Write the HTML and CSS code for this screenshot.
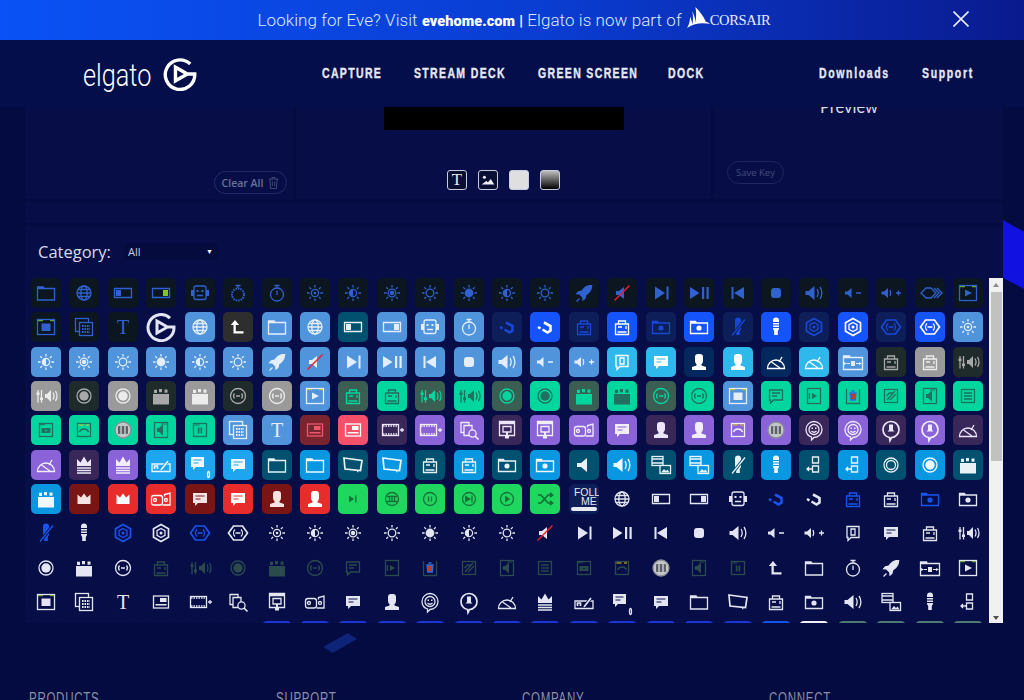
FILE: index.html
```html
<!DOCTYPE html>
<html lang="en">
<head>
<meta charset="utf-8">
<title>Elgato Stream Deck Key Creator</title>
<link rel="stylesheet" href="styles.css">
</head>
<body>
<svg class="sprite" xmlns="http://www.w3.org/2000/svg">
<defs><path id="rays" d="M15 7v2.6M15 20.4V23M7 15h2.6M20.4 15H23M9.3 9.3l1.8 1.8M18.9 18.9l1.8 1.8M9.3 20.7l1.8-1.8M18.9 11.1l1.8-1.8"/></defs>
<symbol id="folder" viewBox="0 0 30 30"><path d="M6.5 10.5h17v11.5h-17zM6.5 10.5V9h5.5l1.2 1.5"/></symbol>
<symbol id="globe" viewBox="0 0 30 30"><circle cx="15" cy="15" r="7"/><ellipse cx="15" cy="15" rx="3.2" ry="7"/><path d="M8 15h14M9 11.5h12M9 18.5h12"/></symbol>
<symbol id="swl" viewBox="0 0 30 30"><path d="M6.5 10.5h17v9h-17z"/><rect class="a" x="8" y="12" width="5" height="6"/></symbol>
<symbol id="swr" viewBox="0 0 30 30"><path d="M6.5 10.5h17v9h-17z"/><rect class="a" x="17" y="12" width="5" height="6"/></symbol>
<symbol id="robot" viewBox="0 0 30 30"><rect x="9" y="8" width="12" height="13.5" rx="2"/><path class="f" d="M6 12h3v6H6zM21 12h3v6h-3zM11.5 12h2v2h-2zM16.5 12h2v2h-2z"/><path d="M12 17.5h6"/></symbol>
<symbol id="timerd" viewBox="0 0 30 30"><circle class="dash" cx="15" cy="16.5" r="6"/><path d="M12.5 7.5h5M15 7.5v2.5"/></symbol>
<symbol id="timer" viewBox="0 0 30 30"><circle cx="15" cy="16.5" r="6.5"/><path d="M12.5 7.5h5M15 7.5v2.5M15 12.5v4.5"/></symbol>
<symbol id="suno" viewBox="0 0 30 30"><use href="#rays"/><circle cx="15" cy="15" r="3.6"/><circle class="f" cx="15" cy="15" r="1.3"/></symbol>
<symbol id="sunh" viewBox="0 0 30 30"><use href="#rays"/><circle cx="15" cy="15" r="3.6"/><path class="f" d="M15 11.4a3.6 3.6 0 0 0 0 7.2z"/></symbol>
<symbol id="sund" viewBox="0 0 30 30"><use href="#rays"/><circle cx="15" cy="15" r="3.8"/><circle class="f" cx="15" cy="15" r="2.2"/></symbol>
<symbol id="sunc" viewBox="0 0 30 30"><use href="#rays"/><circle cx="15" cy="15" r="3.8"/></symbol>
<symbol id="sunf" viewBox="0 0 30 30"><use href="#rays"/><circle class="f" cx="15" cy="15" r="4.4"/></symbol>
<symbol id="rocket" viewBox="0 0 30 30"><path class="f" d="M23.5 6.5c-5 0-8.500 2-11 6l-3.500.8-2.500 3 3.700.3 3 3 .3 3.700 3-2.500.8-3.500c4-2.500 6-5.800 6-10.800z"/><path d="M10.500 20.500l-3 3"/></symbol>
<symbol id="mute" viewBox="0 0 30 30"><path class="f" d="M9 13h3l5-4v12l-5-4H9z"/><path class="red" d="M7.500 22.500l15-15"/></symbol>
<symbol id="next" viewBox="0 0 30 30"><path class="f" d="M9 8.500l10 6.500-10 6.500zM20.500 8.500h2v13h-2z"/></symbol>
<symbol id="plps" viewBox="0 0 30 30"><path class="f" d="M6 9l9.500 6L6 21zM18 9h2.200v12H18zM22.500 9h2.200v12h-2.200z"/></symbol>
<symbol id="prev" viewBox="0 0 30 30"><path class="f" d="M21 9l-10 6 10 6zM8.500 9h2v12h-2z"/></symbol>
<symbol id="stop" viewBox="0 0 30 30"><rect class="f" x="10" y="10" width="10" height="10" rx="3"/></symbol>
<symbol id="vol" viewBox="0 0 30 30"><path class="f" d="M6.500 13h3l6-5v14l-6-5h-3z"/><path d="M18 11c1.500 2.500 1.500 5.500 0 8M21 9c2.500 3.500 2.500 8.500 0 12"/></symbol>
<symbol id="voll" viewBox="0 0 30 30"><path class="f" d="M8 13h4l6-5v14l-6-5H8z"/></symbol>
<symbol id="volm" viewBox="0 0 30 30"><path class="f" d="M7 13.500h2.500l4-3.500v10l-4-3.500H7zM18 14.300h5v1.400h-5z"/></symbol>
<symbol id="volp" viewBox="0 0 30 30"><path class="f" d="M5.500 13.500h2.500l4-3.500v10l-4-3.500H5.500z"/><path d="M14 12c1 2 1 4 0 6M20 15h5M22.500 12.500v5"/></symbol>
<symbol id="chev" viewBox="0 0 30 30"><path d="M11 10l-5 5 5 5h5l5-5-5-5zM19 10l5 5-5 5M22 10l5 5-5 5"/></symbol>
<symbol id="winplay" viewBox="0 0 30 30"><rect x="6.500" y="7.500" width="17" height="15"/><path class="s" d="M7 8.700h16"/><path class="f" d="M12 11.500l7 3.500-7 3.500z"/></symbol>
<symbol id="winsq" viewBox="0 0 30 30"><rect x="6.500" y="7.500" width="17" height="15"/><path class="s" d="M7 8.700h16"/><rect class="f" x="10.500" y="11.500" width="9" height="7.500"/></symbol>
<symbol id="multi" viewBox="0 0 30 30"><rect x="6.500" y="6.500" width="13" height="13"/><rect class="bgf" x="10.500" y="10.500" width="13" height="13"/><path class="dots" d="M13 14h8M13 17h8M13 20h8"/></symbol>
<symbol id="tee" viewBox="0 0 30 30"><text class="tt" x="15" y="22">T</text></symbol>
<symbol id="logo" viewBox="0 0 30 30"><path class="lg" d="M24 6.200A13 13 0 1 0 28 15H21.500L11 9v12l10.500-6"/></symbol>
<symbol id="up" viewBox="0 0 30 30"><path class="f" d="M12 8l-4.200 5h2.700v8.500h10v-2.200h-7.700V13h3.300z"/></symbol>
<symbol id="wave" viewBox="0 0 30 30"><path class="w" d="M14 10.500l6.500 3.500v4.500l-3 2-5-3M8 15l2.500 1.500"/></symbol>
<symbol id="cambox" viewBox="0 0 30 30"><path d="M8.500 12h13v10.500h-13zM11.500 12V9h7v3M10.500 20h9M11 15h4M19 14v3"/></symbol>
<symbol id="foldcam" viewBox="0 0 30 30"><path d="M6.500 11h17v10.500h-17zM6.500 11V9.500h5l1 1.500"/><circle class="f" cx="15" cy="16" r="2.600"/></symbol>
<symbol id="mic" viewBox="0 0 30 30"><path class="f" d="M12 8.500a3 3 0 0 1 6 0v8.500l-1.200 2v4h-3.600v-4L12 17z"/><path class="bgs" d="M12 10.500h6M12 13h6M12 15.500h6"/></symbol>
<symbol id="micx" viewBox="0 0 30 30"><path class="f" d="M12 8.500a3 3 0 0 1 6 0v8.500l-1.200 2v4h-3.600v-4L12 17z"/><path class="bgw" d="M9 23.500l13-16"/><path d="M9 23.500l13-16"/></symbol>
<symbol id="hex" viewBox="0 0 30 30"><path class="t" d="M15 6.500l7.500 4.200v8.600L15 23.500l-7.500-4.200v-8.600z"/><path d="M15 10.500l4 2.200v4.600l-4 2.200-4-2.200v-4.600z"/><circle class="f" cx="15" cy="15" r="1.500"/></symbol>
<symbol id="hex2" viewBox="0 0 30 30"><path class="t" d="M10.500 8h9l5 7-5 7h-9l-5-7z"/><path d="M12 11.500a5 5 0 0 0 0 7M18 11.500a5 5 0 0 1 0 7M12.500 15h5"/></symbol>
<symbol id="bdoc" viewBox="0 0 30 30"><path d="M9 8.500h12v11h-8l-3 3v-3H9z"/><path d="M13 11h4v6h-4z"/></symbol>
<symbol id="chat" viewBox="0 0 30 30"><path class="f" d="M8 9h14v10H13l-3 3v-3H8z"/><path class="bgs" d="M10.500 12h9M10.500 15h5"/></symbol>
<symbol id="chato" viewBox="0 0 30 30"><path d="M8.500 9h13v10h-9l-3 3v-3h-1z"/><path d="M11 12h8M11 15h5"/></symbol>
<symbol id="cclip" viewBox="0 0 30 30"><path class="f" d="M6 7h13v10h-8l-3 3v-3H6z"/><path class="bgs" d="M8.500 10h8M8.500 13h5"/><ellipse cx="23.500" cy="24.500" rx="1" ry="3"/></symbol>
<symbol id="person" viewBox="0 0 30 30"><path class="f" d="M11 10a3 3 0 0 1 3-3h2a3 3 0 0 1 3 3v4a4 4 0 0 1-1.500 3.200V18.500l4.500 1.500v3H8v-3l4.500-1.500v-1.300A4 4 0 0 1 11 14z"/></symbol>
<symbol id="gauge" viewBox="0 0 30 30"><path d="M6.500 21.500a8.500 8.500 0 0 1 17 0z"/><path d="M10.500 15l8.500 6M21 10l-3 5"/></symbol>
<symbol id="foldarr" viewBox="0 0 30 30"><path d="M5.500 10.500h19v12h-19zM5.500 10.500V9h6l1 1.500"/><path class="f" d="M13 14h4v5h-4zM6 15l3 1.500-3 1.500zM21 15l3 1.500-3 1.500zM9 16h3v1H9zM18 16h3v1h-3z"/></symbol>
<symbol id="mixer" viewBox="0 0 30 30"><path d="M7 9v12.500M10.500 9v12.500"/><path class="f" d="M5.500 11.500h3v2.500h-3zM9 16.500h3V19H9zM14 13h2l4-4v12l-4-4h-2z"/><path d="M22 11.500c1.200 2 1.200 5 0 7M24.500 10c1.800 3 1.800 7 0 10"/></symbol>
<symbol id="record" viewBox="0 0 30 30"><circle cx="15" cy="15" r="7"/><circle class="f" cx="15" cy="15" r="4.700"/></symbol>
<symbol id="rings" viewBox="0 0 30 30"><circle cx="15" cy="15" r="7"/><circle cx="15" cy="15" r="4.500"/></symbol>
<symbol id="clap" viewBox="0 0 30 30"><path class="f" d="M7 13h16v10.500H7zM8 8.700h3v3.300H8zM13 8h3v3.300h-3zM18.500 8.500h3v3.300h-3z"/></symbol>
<symbol id="cast" viewBox="0 0 30 30"><circle cx="15" cy="15" r="7.500"/><path d="M11.500 12.500a4 4 0 0 0 0 5M18.500 12.500a4 4 0 0 1 0 5M13 15h4"/></symbol>
<symbol id="wplay" viewBox="0 0 30 30"><rect x="8.500" y="7.500" width="13" height="15"/><path class="f" d="M13 12l5 3-5 3z"/><path d="M10.500 12v6"/></symbol>
<symbol id="wtrash" viewBox="0 0 30 30"><path d="M8.500 8v14.500h13V8"/><path class="tr" d="M12 12h6l-.7 7h-4.600zM13.500 10h3"/></symbol>
<symbol id="wslash" viewBox="0 0 30 30"><rect x="8.500" y="8.500" width="13" height="13"/><path d="M11 19l8-9M14 19l6-6M10.500 15l3-3h3"/></symbol>
<symbol id="wvol" viewBox="0 0 30 30"><rect x="8.500" y="7.500" width="13" height="15"/><path class="s" d="M15 9h5"/><path class="f" d="M11 13h2l4-3.500v11L13 17h-2z"/></symbol>
<symbol id="wlist" viewBox="0 0 30 30"><rect x="8.500" y="8.500" width="13" height="13"/><path d="M11 12h8M11 15h8M11 18h8"/></symbol>
<symbol id="wcam" viewBox="0 0 30 30"><rect x="8.500" y="8.500" width="13" height="13"/><path class="s" d="M9 9.700h12"/><path class="f" d="M10.500 13h9v5h-9z"/><circle class="bgf" cx="15" cy="15.500" r="1.500"/></symbol>
<symbol id="wcurve" viewBox="0 0 30 30"><rect x="8.500" y="8.500" width="13" height="13"/><path class="s" d="M9.500 10h5M17 10h3"/><path d="M10.500 17c1.500-4 7.500-4 9 0"/></symbol>
<symbol id="wpause" viewBox="0 0 30 30"><rect x="8.500" y="8.500" width="13" height="13"/><path class="s" d="M9.500 10h11"/><path class="f" d="M12.800 12.500h1.700v6h-1.700zM15.500 12.500h1.700v6h-1.700z"/></symbol>
<symbol id="round" viewBox="0 0 30 30"><circle class="rg" cx="15" cy="15" r="8"/><rect class="rk" x="10" y="11" width="10" height="8" rx="1"/><path class="rline" d="M13 11v8M17 11v8"/></symbol>
<symbol id="card" viewBox="0 0 30 30"><rect x="7.500" y="9" width="15" height="12"/><path class="f" d="M14 11h6.500v4H14zM9.500 17h11v1.500h-11z"/></symbol>
<symbol id="filmp" viewBox="0 0 30 30"><rect x="5.500" y="9.500" width="16" height="11"/><path class="dsh" d="M6 11h15M6 19h15"/><path d="M23 15h4M25 13v4"/></symbol>
<symbol id="copys" viewBox="0 0 30 30"><path d="M7 7.500h8v10H7z"/><path class="bgf" d="M10 10.500h8v10h-8z"/><circle class="bgf" cx="18.500" cy="18.500" r="3.600"/><path class="t" d="M21 21l3.500 3.500"/></symbol>
<symbol id="pres" viewBox="0 0 30 30"><path d="M7.500 6.500h15v14h-15z"/><path class="f" d="M7 6h16v3.200H7zM14 17h2v3.500h-2zM13 21h4v2.500h-4z"/><path d="M11 11.500h8v5.500h-8z"/></symbol>
<symbol id="cass" viewBox="0 0 30 30"><rect x="5.500" y="11.500" width="11" height="9.500" rx="2.500"/><path d="M16.500 21h7.500V9l-5.500 1.500v2"/><circle cx="9" cy="16" r="1.500"/><circle cx="20" cy="16" r="1.500"/></symbol>
<symbol id="smile" viewBox="0 0 30 30"><path d="M7 14.500a8 8 0 1 1 8 8l-2.500 2.500v-3A8 8 0 0 1 7 14.500z"/><circle cx="15" cy="14.500" r="5"/><path class="f" d="M12.500 12.500h1.500v1.500h-1.500zM16 12.500h1.500v1.500H16z"/><path d="M12.500 16c1.500 1.500 3.500 1.500 5 0"/></symbol>
<symbol id="head" viewBox="0 0 30 30"><path class="t" d="M7 14.500a8 8 0 1 1 8.500 8L14 25.500l-.5-3a8 8 0 0 1-6.500-8z"/><path class="f" d="M13 9.500h4v5.500l1.500 1.500h-7L13 15z"/></symbol>
<symbol id="crown" viewBox="0 0 30 30"><path class="f" d="M8 9l3.500 3.500L15 6.500l3.500 6L22 9v7H8z"/><path d="M8 18h14M8 20.500h14M8 23h14"/></symbol>
<symbol id="crown2" viewBox="0 0 30 30"><path class="f" d="M8.500 10.500l3.500 3L15 9.500l3 4 3.500-3V20h-13z"/></symbol>
<symbol id="sign" viewBox="0 0 30 30"><path d="M6 14h18v7.500H6z"/><path class="bgw" d="M15 20l7-9"/><path class="t" d="M15 20l7-9M8.500 19v-3h3v3"/></symbol>
<symbol id="tilt" viewBox="0 0 30 30"><path class="t" d="M6 8l18 2.500-1.500 10-15.500-1.500z"/><path class="f" d="M18 20l2 2.700.6-2.500z"/></symbol>
<symbol id="fimg" viewBox="0 0 30 30"><rect x="6" y="6.500" width="11" height="9"/><path d="M6 9h11M6 13h11"/><rect class="bgf" x="14" y="15.500" width="10.500" height="8"/><path class="f" d="M15 22.500l3-3.500 2 2 1.500-1.500 2 3z"/></symbol>
<symbol id="usb" viewBox="0 0 30 30"><path d="M13.500 7h6v6h-6zM13.500 16h6v6h-6zM8 19h5M10 17l-2 2 2 2"/></symbol>
<symbol id="cnext" viewBox="0 0 30 30"><path class="f" d="M11 11.500l5 3.500-5 3.500zM17 11.500h1.500v7H17z"/></symbol>
<symbol id="cfilm" viewBox="0 0 30 30"><circle cx="15" cy="15" r="6.500"/><path d="M10 12.500h10M10 17.500h10M12.500 12v6M15 12v6M17.500 12v6"/></symbol>
<symbol id="cpause" viewBox="0 0 30 30"><circle cx="15" cy="15" r="6.500"/><path d="M13.500 12.500v5M16.500 12.500v5"/></symbol>
<symbol id="cskip" viewBox="0 0 30 30"><circle cx="15" cy="15" r="6.500"/><path class="f" d="M11 11.500l6 3.500-6 3.500z"/><path d="M18 11.500v7"/></symbol>
<symbol id="cplay" viewBox="0 0 30 30"><circle cx="15" cy="15" r="6.500"/><path class="f" d="M13 11.500l5 3.500-5 3.500z"/></symbol>
<symbol id="shuf" viewBox="0 0 30 30"><path class="t" d="M8 11h3l7 8h3.500M8 19h3l7-8h3.500M20 9l2.500 2-2.500 2M20 17l2.500 2-2.500 2"/></symbol>
</svg>

<div class="promo">
  <p class="promo-text">Looking for Eve? Visit <strong>evehome.com</strong> <strong>|</strong> Elgato is now part of</p>
  <span class="corsair">
    <svg class="sails" viewBox="0 0 22 20"><path d="M0 20c2-3 3-7 3-11 1 3 2 5 2 8 1-4 1-9 0-13 2 4 3 7 3 11 1-5 1-11 0-15 4 4 8 9 10 14 1 0 3 1 4 2-7-1-15-1-22 4z"/></svg>
    <span class="corsair-name">CORSAIR</span>
  </span>
  <svg class="close" viewBox="0 0 16 16"><path d="M.5.5l15 15M15.500.5l-15 15"/></svg>
</div>

<header class="nav">
  <a class="brand"><span class="brand-name">elgato</span><svg class="brand-mark"><use href="#logo"/></svg></a>
  <nav class="links main-links">
    <a>CAPTURE</a><a>STREAM DECK</a><a>GREEN SCREEN</a><a>DOCK</a>
  </nav>
  <nav class="links aux">
    <a>Downloads</a><a>Support</a>
  </nav>
</header>

<main class="page">
  <section class="editor">
    <div class="pane pane-left">
      <button class="pill clear">Clear All
        <svg class="trash" viewBox="0 0 14 16"><path d="M1 3h12M5 3V1h4v2M2.500 3l.7 12h7.600l.7-12M5.500 6v6M8.500 6v6"/></svg>
      </button>
    </div>
    <div class="pane pane-mid">
      <div class="lcd"></div>
      <div class="tools">
        <span class="tool"><svg viewBox="0 0 30 30"><text class="tt big" x="15" y="24">T</text></svg></span>
        <span class="tool"><svg viewBox="0 0 20 20"><circle class="tw" cx="6" cy="7" r="1.700"/><path class="tw" d="M3 15l5-4 2 1.500 3-3.500 4 6z"/></svg></span>
        <span class="tool solid"></span>
        <span class="tool grad"></span>
      </div>
    </div>
    <div class="pane pane-right">
      <h3 class="preview">Preview</h3>
      <button class="pill save">Save Key</button>
    </div>
  </section>
  <div class="band"></div>
  <section class="library">
    <div class="cat-row">
      <label class="cat-label">Category:</label>
      <div class="select">All<span class="caret">▼</span></div>
    </div>
    <div class="lib-body">
      <div class="grid">
<span class="k d"><svg><use href="#folder"/></svg></span><span class="k d"><svg><use href="#globe"/></svg></span><span class="k d"><svg><use href="#swl"/></svg></span><span class="k d ag"><svg><use href="#swr"/></svg></span><span class="k d"><svg><use href="#robot"/></svg></span><span class="k d"><svg><use href="#timerd"/></svg></span><span class="k d"><svg><use href="#timer"/></svg></span><span class="k d"><svg><use href="#suno"/></svg></span><span class="k d"><svg><use href="#sunh"/></svg></span><span class="k d"><svg><use href="#sund"/></svg></span><span class="k d"><svg><use href="#sunc"/></svg></span><span class="k d"><svg><use href="#sunf"/></svg></span><span class="k d"><svg><use href="#sunh"/></svg></span><span class="k d"><svg><use href="#sunc"/></svg></span><span class="k d"><svg><use href="#rocket"/></svg></span><span class="k d"><svg><use href="#mute"/></svg></span><span class="k d"><svg><use href="#next"/></svg></span><span class="k d"><svg><use href="#plps"/></svg></span><span class="k d"><svg><use href="#prev"/></svg></span><span class="k d"><svg><use href="#stop"/></svg></span><span class="k d"><svg><use href="#vol"/></svg></span><span class="k d"><svg><use href="#volm"/></svg></span><span class="k d"><svg><use href="#volp"/></svg></span><span class="k d"><svg><use href="#chev"/></svg></span><span class="k d ag"><svg><use href="#winplay"/></svg></span>
<span class="k d ag"><svg><use href="#winsq"/></svg></span><span class="k d"><svg><use href="#multi"/></svg></span><span class="k d"><svg><use href="#tee"/></svg></span><span class="k n"><svg><use href="#logo"/></svg></span><span class="k b"><svg><use href="#globe"/></svg></span><span class="k gy"><svg><use href="#up"/></svg></span><span class="k b"><svg><use href="#folder"/></svg></span><span class="k b"><svg><use href="#globe"/></svg></span><span class="k st"><svg><use href="#swl"/></svg></span><span class="k b"><svg><use href="#swr"/></svg></span><span class="k b"><svg><use href="#robot"/></svg></span><span class="k b"><svg><use href="#timer"/></svg></span><span class="k nv"><svg><use href="#wave"/></svg></span><span class="k bb"><svg><use href="#wave"/></svg></span><span class="k nv"><svg><use href="#cambox"/></svg></span><span class="k bb"><svg><use href="#cambox"/></svg></span><span class="k nv"><svg><use href="#foldcam"/></svg></span><span class="k bb"><svg><use href="#foldcam"/></svg></span><span class="k nv"><svg><use href="#micx"/></svg></span><span class="k bb"><svg><use href="#mic"/></svg></span><span class="k nv"><svg><use href="#hex"/></svg></span><span class="k bb"><svg><use href="#hex"/></svg></span><span class="k nv"><svg><use href="#hex2"/></svg></span><span class="k bb"><svg><use href="#hex2"/></svg></span><span class="k b"><svg><use href="#suno"/></svg></span>
<span class="k b"><svg><use href="#sunh"/></svg></span><span class="k b"><svg><use href="#sund"/></svg></span><span class="k b"><svg><use href="#sunc"/></svg></span><span class="k b"><svg><use href="#sunf"/></svg></span><span class="k b"><svg><use href="#sunh"/></svg></span><span class="k b"><svg><use href="#sunc"/></svg></span><span class="k b"><svg><use href="#rocket"/></svg></span><span class="k b"><svg><use href="#mute"/></svg></span><span class="k b"><svg><use href="#next"/></svg></span><span class="k b"><svg><use href="#plps"/></svg></span><span class="k b"><svg><use href="#prev"/></svg></span><span class="k b"><svg><use href="#stop"/></svg></span><span class="k b"><svg><use href="#vol"/></svg></span><span class="k b"><svg><use href="#volm"/></svg></span><span class="k b"><svg><use href="#volp"/></svg></span><span class="k cy"><svg><use href="#bdoc"/></svg></span><span class="k cy"><svg><use href="#chat"/></svg></span><span class="k cn"><svg><use href="#person"/></svg></span><span class="k cy"><svg><use href="#person"/></svg></span><span class="k cn"><svg><use href="#gauge"/></svg></span><span class="k cy"><svg><use href="#gauge"/></svg></span><span class="k b"><svg><use href="#foldarr"/></svg></span><span class="k gd"><svg><use href="#cambox"/></svg></span><span class="k gl"><svg><use href="#cambox"/></svg></span><span class="k gd"><svg><use href="#mixer"/></svg></span>
<span class="k gl"><svg><use href="#mixer"/></svg></span><span class="k gd"><svg><use href="#record"/></svg></span><span class="k gl"><svg><use href="#record"/></svg></span><span class="k gd"><svg><use href="#clap"/></svg></span><span class="k gl"><svg><use href="#clap"/></svg></span><span class="k gd"><svg><use href="#cast"/></svg></span><span class="k gl"><svg><use href="#cast"/></svg></span><span class="k b ac"><svg><use href="#winplay"/></svg></span><span class="k td"><svg><use href="#cambox"/></svg></span><span class="k tl"><svg><use href="#cambox"/></svg></span><span class="k td"><svg><use href="#mixer"/></svg></span><span class="k tl"><svg><use href="#mixer"/></svg></span><span class="k td"><svg><use href="#record"/></svg></span><span class="k tl"><svg><use href="#record"/></svg></span><span class="k td"><svg><use href="#clap"/></svg></span><span class="k tl"><svg><use href="#clap"/></svg></span><span class="k td"><svg><use href="#cast"/></svg></span><span class="k tl"><svg><use href="#cast"/></svg></span><span class="k b ac"><svg><use href="#winsq"/></svg></span><span class="k tl"><svg><use href="#chato"/></svg></span><span class="k tl"><svg><use href="#wplay"/></svg></span><span class="k tl"><svg><use href="#wtrash"/></svg></span><span class="k tl"><svg><use href="#wslash"/></svg></span><span class="k tl"><svg><use href="#wvol"/></svg></span><span class="k tl"><svg><use href="#wlist"/></svg></span>
<span class="k tl"><svg><use href="#wcam"/></svg></span><span class="k tl ac"><svg><use href="#wcurve"/></svg></span><span class="k tl"><svg><use href="#round"/></svg></span><span class="k tl"><svg><use href="#wvol"/></svg></span><span class="k tl"><svg><use href="#wpause"/></svg></span><span class="k b"><svg><use href="#multi"/></svg></span><span class="k b"><svg><use href="#tee"/></svg></span><span class="k rd"><svg><use href="#card"/></svg></span><span class="k rs"><svg><use href="#card"/></svg></span><span class="k pd"><svg><use href="#filmp"/></svg></span><span class="k pl"><svg><use href="#filmp"/></svg></span><span class="k pl"><svg><use href="#copys"/></svg></span><span class="k pd"><svg><use href="#pres"/></svg></span><span class="k pl"><svg><use href="#pres"/></svg></span><span class="k pl"><svg><use href="#cass"/></svg></span><span class="k pl"><svg><use href="#chat"/></svg></span><span class="k pd"><svg><use href="#person"/></svg></span><span class="k pl"><svg><use href="#person"/></svg></span><span class="k pl ac"><svg><use href="#wcurve"/></svg></span><span class="k pl"><svg><use href="#round"/></svg></span><span class="k pd"><svg><use href="#smile"/></svg></span><span class="k pl"><svg><use href="#smile"/></svg></span><span class="k pd"><svg><use href="#head"/></svg></span><span class="k pl"><svg><use href="#head"/></svg></span><span class="k pd"><svg><use href="#gauge"/></svg></span>
<span class="k pl"><svg><use href="#gauge"/></svg></span><span class="k pd"><svg><use href="#crown"/></svg></span><span class="k pl"><svg><use href="#crown"/></svg></span><span class="k sk"><svg><use href="#sign"/></svg></span><span class="k sk"><svg><use href="#cclip"/></svg></span><span class="k sk"><svg><use href="#chat"/></svg></span><span class="k st"><svg><use href="#folder"/></svg></span><span class="k sb"><svg><use href="#folder"/></svg></span><span class="k st"><svg><use href="#tilt"/></svg></span><span class="k sb"><svg><use href="#tilt"/></svg></span><span class="k st"><svg><use href="#cambox"/></svg></span><span class="k sb"><svg><use href="#cambox"/></svg></span><span class="k st"><svg><use href="#foldcam"/></svg></span><span class="k sb"><svg><use href="#foldcam"/></svg></span><span class="k st"><svg><use href="#voll"/></svg></span><span class="k sb"><svg><use href="#vol"/></svg></span><span class="k st"><svg><use href="#fimg"/></svg></span><span class="k sb"><svg><use href="#fimg"/></svg></span><span class="k st"><svg><use href="#micx"/></svg></span><span class="k sb"><svg><use href="#mic"/></svg></span><span class="k st"><svg><use href="#usb"/></svg></span><span class="k sb"><svg><use href="#usb"/></svg></span><span class="k st"><svg><use href="#rings"/></svg></span><span class="k sb"><svg><use href="#record"/></svg></span><span class="k st"><svg><use href="#clap"/></svg></span>
<span class="k sb"><svg><use href="#clap"/></svg></span><span class="k dr"><svg><use href="#crown2"/></svg></span><span class="k r"><svg><use href="#crown2"/></svg></span><span class="k r"><svg><use href="#cass"/></svg></span><span class="k dr"><svg><use href="#chat"/></svg></span><span class="k r"><svg><use href="#chat"/></svg></span><span class="k dr"><svg><use href="#person"/></svg></span><span class="k r"><svg><use href="#person"/></svg></span><span class="k g"><svg><use href="#cnext"/></svg></span><span class="k g"><svg><use href="#cfilm"/></svg></span><span class="k g"><svg><use href="#cpause"/></svg></span><span class="k g"><svg><use href="#cskip"/></svg></span><span class="k g"><svg><use href="#cplay"/></svg></span><span class="k g"><svg><use href="#shuf"/></svg></span><span class="k fm"><span class="fm-text">FOLLOW<br><span class="fm-me">ME</span></span><span class="fm-bar"></span></span><span class="k n"><svg><use href="#globe"/></svg></span><span class="k n"><svg><use href="#swl"/></svg></span><span class="k n"><svg><use href="#swr"/></svg></span><span class="k n"><svg><use href="#robot"/></svg></span><span class="k nb"><svg><use href="#wave"/></svg></span><span class="k n"><svg><use href="#wave"/></svg></span><span class="k nb"><svg><use href="#cambox"/></svg></span><span class="k n"><svg><use href="#cambox"/></svg></span><span class="k nb"><svg><use href="#foldcam"/></svg></span><span class="k n"><svg><use href="#foldcam"/></svg></span>
<span class="k nb"><svg><use href="#micx"/></svg></span><span class="k n"><svg><use href="#mic"/></svg></span><span class="k nb"><svg><use href="#hex"/></svg></span><span class="k n"><svg><use href="#hex"/></svg></span><span class="k nb"><svg><use href="#hex2"/></svg></span><span class="k n"><svg><use href="#hex2"/></svg></span><span class="k n"><svg><use href="#suno"/></svg></span><span class="k n"><svg><use href="#sunh"/></svg></span><span class="k n"><svg><use href="#sund"/></svg></span><span class="k n"><svg><use href="#sunc"/></svg></span><span class="k n"><svg><use href="#sunf"/></svg></span><span class="k n"><svg><use href="#sunh"/></svg></span><span class="k n"><svg><use href="#sunc"/></svg></span><span class="k n"><svg><use href="#mute"/></svg></span><span class="k n"><svg><use href="#next"/></svg></span><span class="k n"><svg><use href="#plps"/></svg></span><span class="k n"><svg><use href="#prev"/></svg></span><span class="k n"><svg><use href="#stop"/></svg></span><span class="k n"><svg><use href="#vol"/></svg></span><span class="k n"><svg><use href="#volm"/></svg></span><span class="k n"><svg><use href="#volp"/></svg></span><span class="k n"><svg><use href="#bdoc"/></svg></span><span class="k n"><svg><use href="#chat"/></svg></span><span class="k n"><svg><use href="#cambox"/></svg></span><span class="k n"><svg><use href="#mixer"/></svg></span>
<span class="k n"><svg><use href="#record"/></svg></span><span class="k n"><svg><use href="#clap"/></svg></span><span class="k n"><svg><use href="#cast"/></svg></span><span class="k dm"><svg><use href="#cambox"/></svg></span><span class="k dm"><svg><use href="#mixer"/></svg></span><span class="k dm"><svg><use href="#record"/></svg></span><span class="k dm"><svg><use href="#clap"/></svg></span><span class="k dm"><svg><use href="#cast"/></svg></span><span class="k dm"><svg><use href="#chato"/></svg></span><span class="k dm"><svg><use href="#wplay"/></svg></span><span class="k dm"><svg><use href="#wtrash"/></svg></span><span class="k dm"><svg><use href="#wslash"/></svg></span><span class="k dm"><svg><use href="#wvol"/></svg></span><span class="k dm"><svg><use href="#wlist"/></svg></span><span class="k dm"><svg><use href="#wcam"/></svg></span><span class="k dm ac"><svg><use href="#wcurve"/></svg></span><span class="k n"><svg><use href="#round"/></svg></span><span class="k dm"><svg><use href="#wvol"/></svg></span><span class="k dm"><svg><use href="#wpause"/></svg></span><span class="k n"><svg><use href="#up"/></svg></span><span class="k n"><svg><use href="#folder"/></svg></span><span class="k n"><svg><use href="#timer"/></svg></span><span class="k n"><svg><use href="#rocket"/></svg></span><span class="k n"><svg><use href="#foldarr"/></svg></span><span class="k n ag"><svg><use href="#winplay"/></svg></span>
<span class="k n ag"><svg><use href="#winsq"/></svg></span><span class="k n"><svg><use href="#multi"/></svg></span><span class="k n"><svg><use href="#tee"/></svg></span><span class="k n"><svg><use href="#card"/></svg></span><span class="k n"><svg><use href="#filmp"/></svg></span><span class="k n"><svg><use href="#copys"/></svg></span><span class="k n"><svg><use href="#pres"/></svg></span><span class="k n"><svg><use href="#cass"/></svg></span><span class="k n"><svg><use href="#chat"/></svg></span><span class="k n"><svg><use href="#person"/></svg></span><span class="k n"><svg><use href="#smile"/></svg></span><span class="k n"><svg><use href="#head"/></svg></span><span class="k n"><svg><use href="#gauge"/></svg></span><span class="k n"><svg><use href="#crown"/></svg></span><span class="k n"><svg><use href="#sign"/></svg></span><span class="k n"><svg><use href="#cclip"/></svg></span><span class="k n"><svg><use href="#chat"/></svg></span><span class="k n"><svg><use href="#folder"/></svg></span><span class="k n"><svg><use href="#tilt"/></svg></span><span class="k n"><svg><use href="#cambox"/></svg></span><span class="k n"><svg><use href="#foldcam"/></svg></span><span class="k n"><svg><use href="#vol"/></svg></span><span class="k n"><svg><use href="#fimg"/></svg></span><span class="k n"><svg><use href="#mic"/></svg></span><span class="k n"><svg><use href="#usb"/></svg></span>
<span class="k"></span><span class="k"></span><span class="k"></span><span class="k"></span><span class="k"></span><span class="k"></span><span class="k c1"></span><span class="k c1"></span><span class="k c1"></span><span class="k c1"></span><span class="k c1"></span><span class="k c1"></span><span class="k c1"></span><span class="k c1"></span><span class="k c1"></span><span class="k c1"></span><span class="k c1"></span><span class="k c1"></span><span class="k c1"></span><span class="k c2"></span><span class="k c3"></span><span class="k c4"></span><span class="k c4"></span><span class="k c4"></span><span class="k c4"></span>
      </div>
      <div class="scroll">
        <span class="scroll-btn up"></span>
        <span class="scroll-thumb"></span>
        <span class="scroll-btn down"></span>
      </div>
    </div>
  </section>
</main>

<footer class="foot">
  <h4>PRODUCTS</h4><h4>SUPPORT</h4><h4>COMPANY</h4><h4>CONNECT</h4>
</footer>

<div class="deco deco-right"></div>
<div class="deco deco-bar"></div>
</body>
</html>
```

FILE: styles.css
```css
html, body { margin: 0; height: 700px; overflow: hidden; }
body { background: #030b40; font-family: Roboto, "Liberation Sans", sans-serif; color: #fff; }
.sprite { display: none; }

.promo { height: 40px; display: flex; align-items: center; justify-content: center; gap: 5px; padding-left: 4px; background: linear-gradient(90deg, #0a52f5 0%, #0a3cd0 55%, #0a1a8e 100%); }
.promo-text { margin: 0; font-size: 17px; font-weight: 300; color: #dfe8ff; letter-spacing: .07px; }
.promo-text strong { font-weight: 900; color: #fff; font-size: 14.5px; }
.corsair { display: flex; align-items: flex-end; height: 21px; margin-top: -5px; }
.sails { width: 23px; height: 21px; fill: #fff; }
.corsair-name { font: 14.5px "Liberation Serif", serif; letter-spacing: -.3px; line-height: 15px; color: #e8eeff; }
.close { position: absolute; left: 953px; top: 11px; width: 16px; height: 16px; stroke: #e8eeff; stroke-width: 1.6; fill: none; }

.nav { height: 67px; display: flex; align-items: center; background: #040e4a; padding-left: 83px; }
.brand { display: flex; align-items: center; gap: 11px; width: 239px; flex: none; }
.brand-name { width: 69px; font: 300 32px Roboto, sans-serif; color: #fff; line-height: 34px; margin-top: 3px; transform: scaleX(.79); transform-origin: 0 50%; white-space: nowrap; }
.brand-mark { width: 34px; height: 34px; color: #fff; fill: none; flex: none; }
.links { display: grid; white-space: nowrap; margin-top: -2px; }
.main-links { grid-template-columns: 92px 124px 130px 36px; }
.links a { display: block; font: 700 14px "Liberation Sans", sans-serif; letter-spacing: 1.8px; color: #e6e8f2; -webkit-text-stroke: .35px #e6e8f2; transform: scaleX(.75); transform-origin: 0 50%; }
.aux { margin-left: 115px; grid-template-columns: 103px 60px; }
.aux a { letter-spacing: 2.2px; }

.page { padding: 0 21px 0 25px; }
.editor { height: 92px; display: grid; grid-template-columns: 268px 415px 1fr; gap: 3px; }
.pane { background: #070e47; display: flex; flex-direction: column; overflow: hidden; }
.pane-left { align-items: flex-end; justify-content: flex-end; padding: 0 6px 5px 0; }
.pane-mid { align-items: center; }
.pane-right { align-items: flex-start; padding-left: 13px; }
.pill { font-family: "Open Sans", sans-serif; background: none; border-radius: 12px; padding: 0; display: flex; align-items: center; justify-content: center; }
.clear { width: 73px; height: 23px; gap: 5px; border: 1.5px solid #232b66; color: #69729a; font-size: 10.5px; font-weight: 600; }
.trash { width: 11px; height: 14px; fill: none; stroke: #4c5580; stroke-width: 1; }
.lcd { width: 240px; height: 23px; background: #000; }
.tools { margin-top: 40px; display: flex; gap: 11px; }
.tool { width: 18px; height: 18px; border: 1px solid #c9cddb; border-radius: 3px; background: #0a1033; display: block; overflow: hidden; }
.tool svg { display: block; width: 18px; height: 18px; color: #e6e8f2; }
.tool .tw { fill: #eef0f6; }
.solid { background: #dfdfdf; }
.grad { background: linear-gradient(#bdbdbd, #000); }
.preview { margin: -11px 0 0 93px; font: 400 16.5px Lato, sans-serif; color: #d9dbe6; line-height: 22px; }
.save { margin-top: 43px; width: 57px; height: 23px; border: 1.5px solid #1f265e; color: #454d7a; font-size: 9.5px; }

.band { height: 20px; margin-top: 4px; background: #070e47; }
.library { margin-top: 4px; height: 396px; background: #070e47; overflow: hidden; }
.cat-row { height: 49px; padding-bottom: 2px; display: flex; align-items: center; padding-left: 13px; gap: 14px; }
.cat-label { font: 400 16.5px "Open Sans", sans-serif; color: #d9dbe6; }
.select { width: 93px; height: 17px; background: #050b3d; color: #c9ccda; font: 11px "Open Sans", sans-serif; line-height: 17px; padding-left: 3px; box-sizing: border-box; display: flex; justify-content: space-between; }
.caret { font-size: 7px; color: #fff; padding-right: 5px; }

.lib-body { display: flex; height: 346px; padding-left: 6px; }
.grid { width: 958px; height: 346px; overflow: hidden; display: grid; grid-template-columns: repeat(25, 30px); grid-auto-rows: 30px; column-gap: 8.43px; row-gap: 4.33px; }
.k { --a: currentColor; --bg: #070e47; width: 30px; height: 30px; border-radius: 5px; display: block; color: #fff; background: var(--bg); overflow: hidden; }
.k svg { display: block; width: 30px; height: 30px; fill: none; stroke: currentColor; stroke-width: 1.3; }

.f { fill: currentColor; stroke: none; }
.a { fill: var(--a); stroke: none; }
.s { stroke: var(--a); stroke-width: 1; stroke-dasharray: 5 7; }
.t { stroke-width: 1.7; }
.red { stroke: #f01c2c; stroke-width: 1.5; }
.dash { stroke-width: 2; stroke-dasharray: 1.5 1; }
.dots { stroke-width: 1.8; stroke-dasharray: 1.6 .9; }
.dsh { stroke-width: 1.4; stroke-dasharray: 1.5 1; }
.bgs { stroke: var(--bg); stroke-width: 1.2; }
.bgw { stroke: var(--bg); stroke-width: 3.2; }
.bgf { fill: var(--bg); }
.w { stroke-width: 2.6; }
.lg { stroke: currentColor; stroke-width: 3; fill: none; }
.tt { font: 20px "Liberation Serif", serif; fill: currentColor; stroke: none; text-anchor: middle; }
.big { font-size: 28px; }
.tr { fill: #c0392b; stroke: #2f6dd8; }
.rg { fill: #c4c7c9; stroke: #8b8f94; }
.rk { fill: #5b6166; stroke: none; }
.rline { stroke: #d5d7d9; }

.d { --bg: #0b1621; color: #2f62cf; }
.ag { --a: #7ec820; }
.ac { --a: #e2c41c; }
.n { color: #e3e6f2; }
.nb { color: #1a54ee; }
.dm { color: #2a4a4c; }
.b { --bg: #5094dc; color: #e3eefa; }
.gy { --bg: #2e2e2e; color: #fff; }
.st { --bg: #00506f; color: #e8f2f6; }
.nv { --bg: #0d1e58; color: #1748d6; }
.bb { --bg: #1654fb; color: #fff; }
.cy { --bg: #2fb8ec; color: #fff; }
.cn { --bg: #03285e; color: #fff; }
.gd { --bg: #1f2a2a; color: #a8a8a8; }
.gl { --bg: #9a9a9a; color: #ececec; }
.td { --bg: #3b5e52; color: #00d69e; }
.tl { --bg: #00d69e; color: #22705f; }
.rd { --bg: #7a2430; color: #f0566c; }
.rs { --bg: #f5506a; color: #fff; }
.pd { --bg: #39275a; color: #ece6f8; }
.pl { --bg: #8a63d8; color: #f2edfb; }
.sk { --bg: #1da5f0; color: #eef8fe; }
.sb { --bg: #0a97e2; color: #eef8fe; }
.dr { --bg: #7a1515; color: #f6e4e4; }
.r { --bg: #e82c2c; color: #fff; }
.g { --bg: #1fd65f; color: #15703a; }
.c1 { background: #1a36d8; }
.c2 { background: #1553ee; }
.c3 { background: #f0f0f5; }
.c4 { background: #4e7a74; }

.fm { --bg: #0d1e58; color: #e6e8f2; white-space: nowrap; }
.fm-text { display: block; height: 22px; font: 400 10.5px/9px "Liberation Sans", sans-serif; padding: 4px 0 0 5px; box-sizing: border-box; }
.fm-me { padding-left: 7px; }
.fm-bar { display: block; width: 26px; height: 4px; margin: 1px 0 0 2px; background: #e8eaf2; border-radius: 2px; }

.scroll { width: 14px; height: 346px; background: #f1f1f1; display: flex; flex-direction: column; align-items: center; }
.scroll-btn { height: 14px; width: 14px; flex: none; position: relative; }
.scroll-btn::after { content: ""; position: absolute; left: 3.5px; width: 0; height: 0; border-left: 3.5px solid transparent; border-right: 3.5px solid transparent; }
.up::after { top: 5px; border-bottom: 4px solid #8a8a8a; }
.down::after { top: 6px; border-top: 4px solid #505050; }
.scroll-thumb { width: 11px; height: 169px; background: #c1c1c1; flex: none; }
.down { margin-top: auto; }

.foot { margin: 67px 0 0; padding-left: 29px; display: grid; grid-template-columns: repeat(4, 246.5px); white-space: nowrap; }
.foot h4 { margin: 0; font: 400 16px/17px "Liberation Sans", sans-serif; letter-spacing: 1px; color: #8c8fa6; transform: scaleX(.72); transform-origin: 0 50%; }

.deco { position: absolute; }
.deco-right { left: 1003px; top: 220px; width: 21px; height: 69px; background: #1212e0; clip-path: polygon(0 0, 100% 17%, 100% 100%, 0 84%); }
.deco-bar { left: 323px; top: 633px; width: 34px; height: 20px; background: #0e2478; clip-path: polygon(73% 0, 100% 30%, 29% 100%, 0 70%); }
```
